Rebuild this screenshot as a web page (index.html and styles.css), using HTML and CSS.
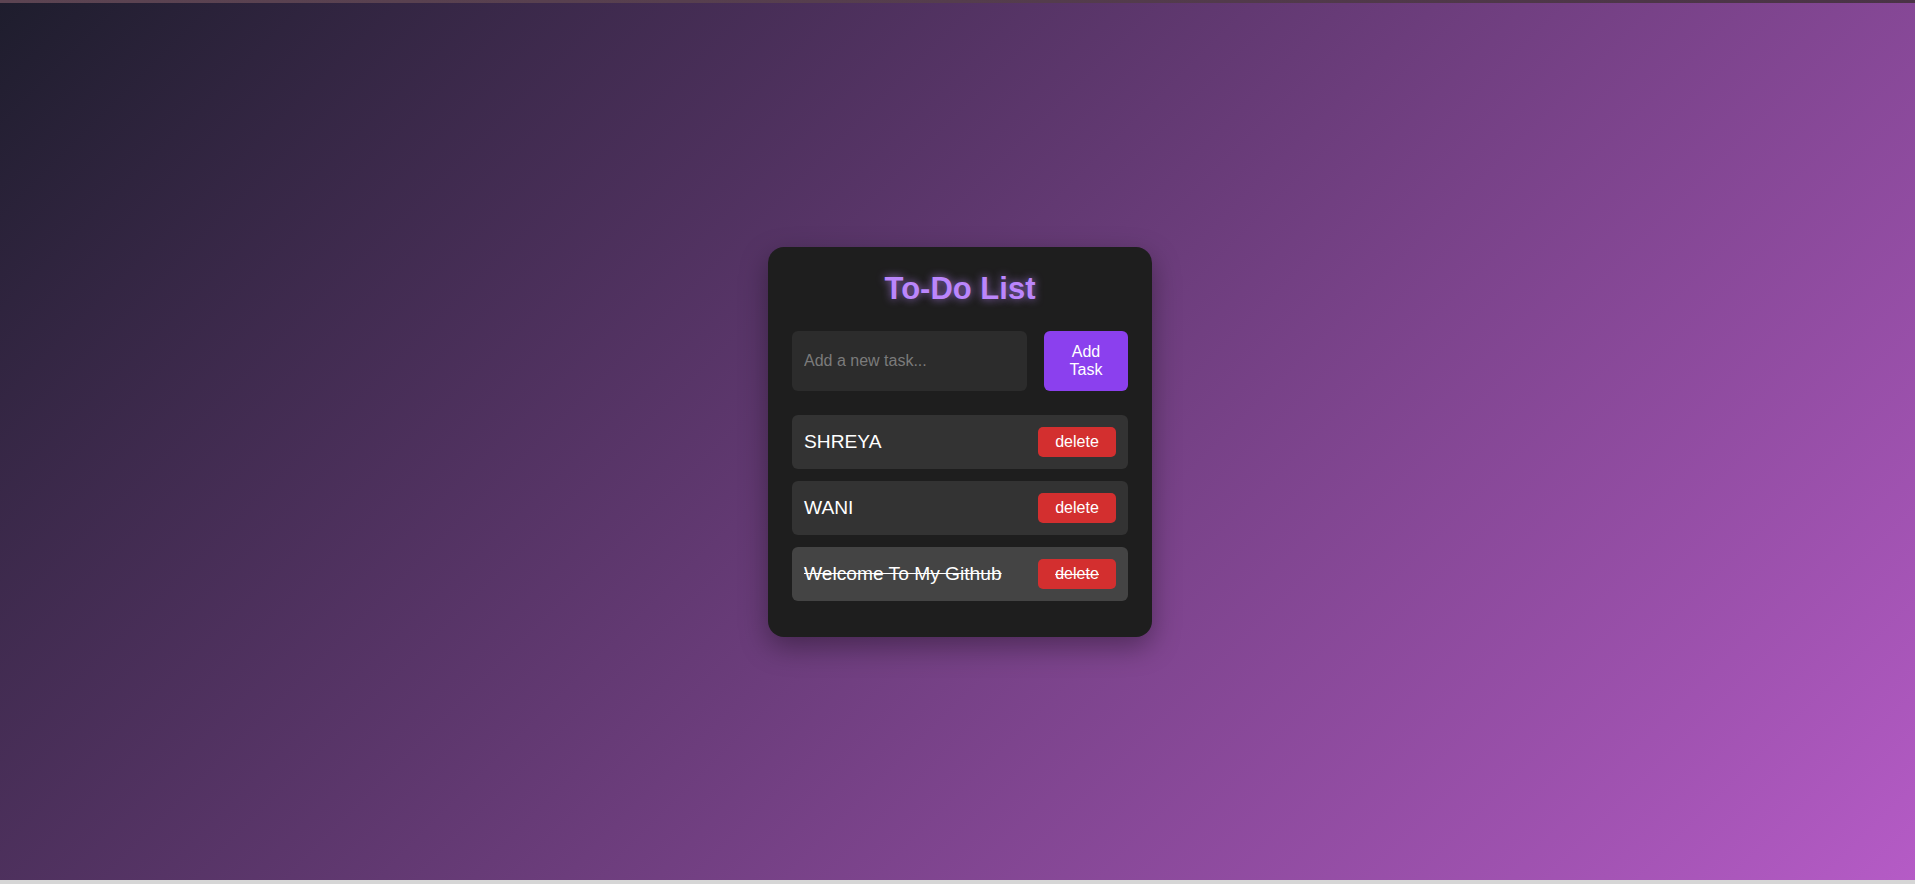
FILE: index.html
```html
<!DOCTYPE html>
<html lang="en">
<head>
<meta charset="UTF-8">
<title>To-Do List</title>
<link rel="stylesheet" href="styles.css">
</head>
<body>
<div class="topline"></div>
<main class="page">
  <section class="card">
    <h1 class="title">To-Do List</h1>
    <div class="entry">
      <input class="task-input" type="text" placeholder="Add a new task...">
      <button class="add-btn">Add Task</button>
    </div>
    <ul class="tasks">
      <li class="task"><span class="task-text">SHREYA</span><button class="del-btn">delete</button></li>
      <li class="task"><span class="task-text">WANI</span><button class="del-btn">delete</button></li>
      <li class="task done"><span class="task-text">Welcome To My Github</span><button class="del-btn">delete</button></li>
    </ul>
  </section>
</main>
</body>
</html>
```
FILE: styles.css
```css
html {
  background: #d6d6d6;
}
body {
  margin: 0;
  font-family: "Liberation Sans", Arial, sans-serif;
  height: 880px;
  display: flex;
  flex-direction: column;
  background: linear-gradient(135deg, #1e1d2d 0%, #b55bc6 100%);
}
.topline {
  height: 3px;
  background: linear-gradient(90deg, #5c4452, #553d4d 50%, #4a3346);
  flex: 0 0 auto;
}
.page {
  flex: 1;
  display: flex;
  align-items: center;
  justify-content: center;
  padding-left: 5px;
}
.card {
  width: 336px;
  padding: 24px 24px 24px;
  background: #1e1e1e;
  border-radius: 16px;
  box-shadow: 0 10px 28px rgba(0, 0, 0, 0.35);
}
.title {
  margin: 0 0 24px;
  text-align: center;
  font-size: 31px;
  font-weight: bold;
  color: #bb86fc;
  text-shadow: 0 0 8px rgba(187, 134, 252, 0.75);
}
.entry {
  display: flex;
  gap: 17px;
  margin-bottom: 24px;
}
.task-input {
  flex: 1 1 auto;
  min-width: 0;
  border: none;
  outline: none;
  background: #2c2c2c;
  border-radius: 6px;
  padding: 0 12px;
  font-family: inherit;
  font-size: 16px;
  color: #fff;
}
.task-input::placeholder {
  color: #7b7b7b;
}
.add-btn {
  box-sizing: border-box;
  flex: 0 0 auto;
  width: 84px;
  padding: 12px 22px;
  border: none;
  border-radius: 6px;
  background: #8b40ee;
  color: #fff;
  font-family: inherit;
  font-size: 16px;
  line-height: 18px;
  text-align: center;
}
.tasks {
  list-style: none;
  margin: 0;
  padding: 0;
}
.task {
  display: flex;
  align-items: center;
  justify-content: space-between;
  padding: 12px;
  margin-bottom: 12px;
  background: #333333;
  border-radius: 6px;
  color: #fff;
  font-size: 19.2px;
}
.task.done {
  background: #444444;
  text-decoration: line-through;
}
.del-btn {
  height: 30px;
  width: 78px;
  border: none;
  border-radius: 5px;
  background: #d32f2f;
  color: #fff;
  font-family: inherit;
  font-size: 16px;
  padding: 0;
}
.task.done .del-btn {
  text-decoration: line-through;
}
```
